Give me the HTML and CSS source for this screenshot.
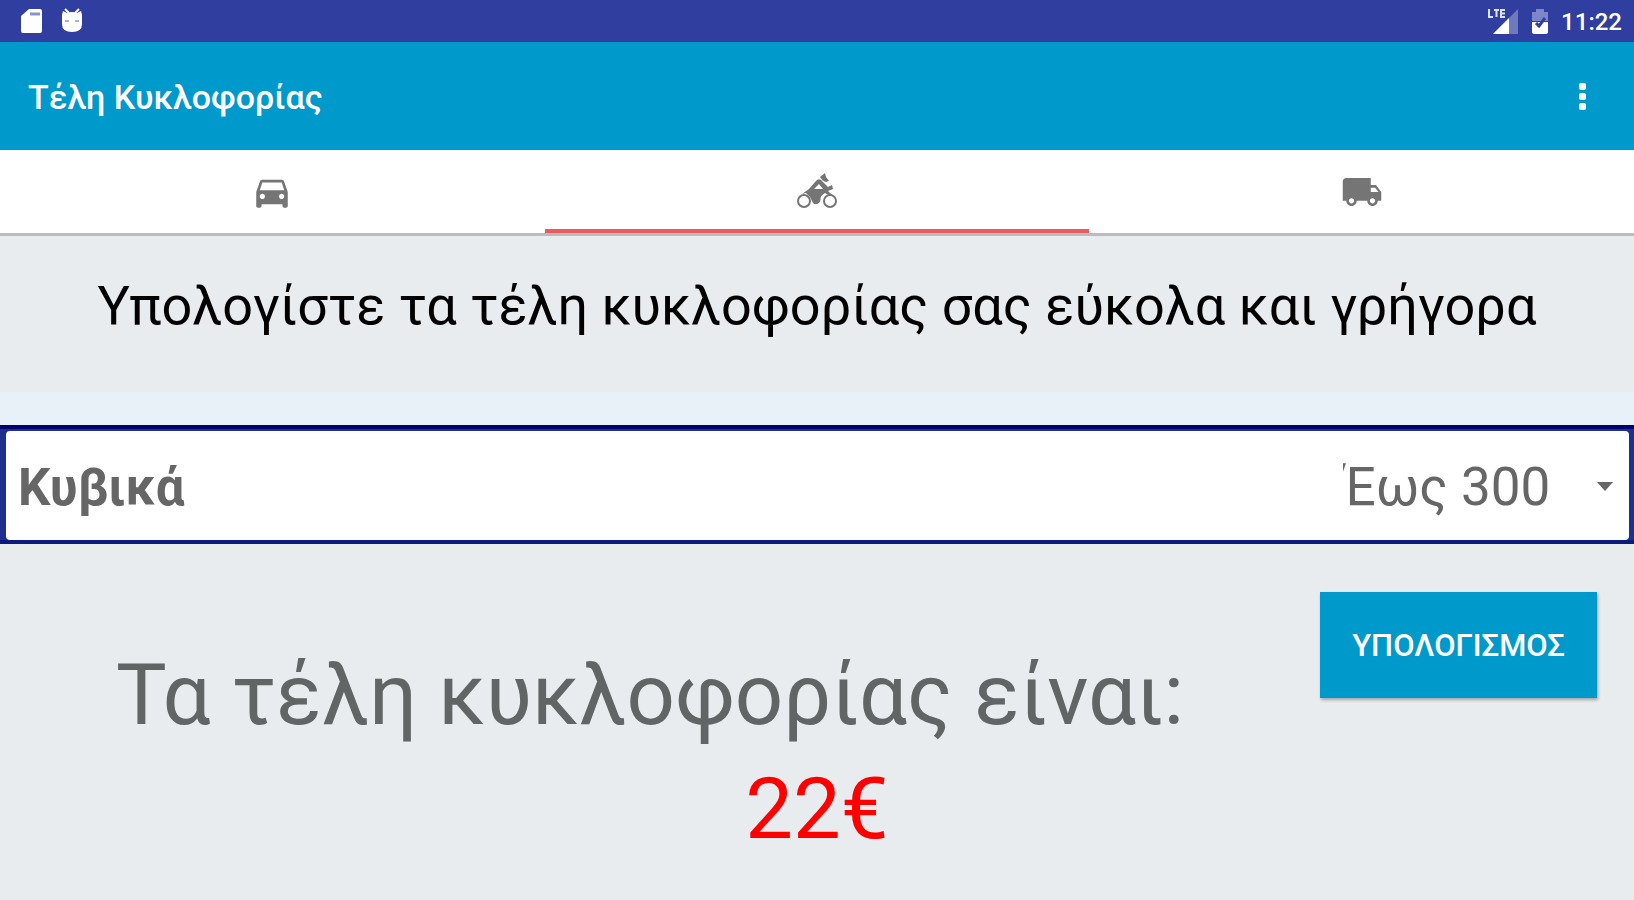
FILE: index.html
```html
<!DOCTYPE html>
<html lang="el">
<head>
    <meta charset="UTF-8">
    <meta name="viewport" content="width=device-width, initial-scale=1.0">
    <title>Τέλη Κυκλοφορίας</title>
    <link rel="stylesheet" href="styles.css">
</head>
<body>
    <div class="status-bar">
        <div class="status-group status-left">
            <svg class="status-icon" viewBox="0 0 24 28">
                <path d="M9 2h11q2 0 2 2v20q0 2-2 2H3q-2 0-2-2V9z" fill="#fff"/>
                <path d="M10 7h10" stroke="#8b93cf" stroke-width="3"/>
            </svg>
            <svg class="status-icon" viewBox="0 0 24 28">
                <path d="M5 2l4 4M19 2l-4 4" stroke="#fff" stroke-width="2"/>
                <path d="M3 4l4 2q5-2 10 0l4-2 1 4v9q0 8-10 8T2 17V8z" fill="#fff"/>
                <path d="M5 14h4M15 14h4" stroke="#aab0dd" stroke-width="2"/>
            </svg>
        </div>
        <div class="status-group">
            <svg class="signal-icon" viewBox="0 0 34 28">
                <path d="M33 2v25H8z" fill="#6f79c0"/>
                <path d="M24 11v16H8z" fill="#fff"/>
                <path d="M4 2v8h4M9 3h5M11.500 3v7M20 3h-4v7h4M16 6.500h4" fill="none" stroke="#dfe2f5" stroke-width="2"/>
            </svg>
            <svg class="battery-icon" viewBox="0 0 18 28">
                <path d="M5 2h8v3h4v9H1V5h4z" fill="#7d86c8"/>
                <path d="M1 15h16v10q0 2-2 2H3q-2 0-2-2z" fill="#fff"/>
                <path d="M14 11l-6 8-3-3" fill="none" stroke="#303f9f" stroke-width="3"/>
            </svg>
            <span class="clock">11:22</span>
        </div>
    </div>

    <header class="app-bar">
        <h1>Τέλη Κυκλοφορίας</h1>
        <button class="menu-button" type="button" aria-label="Μενού">
            <svg viewBox="0 0 8 28">
                <rect x="0" y="0" width="7" height="7" rx="2"/>
                <rect x="0" y="10" width="7" height="7" rx="2"/>
                <rect x="0" y="20" width="7" height="7" rx="2"/>
            </svg>
        </button>
    </header>

    <nav class="tabs">
        <button class="tab" type="button" aria-label="Αυτοκίνητο">
            <svg viewBox="0 0 24 24">
                <path d="M18.920 6.010C18.720 5.420 18.160 5 17.500 5h-11c-.66 0-1.210.42-1.420 1.010L3 12v8c0 .55.45 1 1 1h1c.55 0 1-.45 1-1v-1h12v1c0 .55.45 1 1 1h1c.55 0 1-.45 1-1v-8l-2.080-5.990zM6.500 16c-.83 0-1.500-.67-1.500-1.500S5.670 13 6.500 13s1.500.67 1.500 1.500S7.330 16 6.500 16zm11 0c-.83 0-1.500-.67-1.500-1.500s.67-1.500 1.500-1.500 1.500.67 1.500 1.500-.67 1.500-1.500 1.500zM5 11l1.500-4.500h11L19 11H5z"/>
            </svg>
        </button>
        <button class="tab active" type="button" aria-label="Μοτοσυκλέτα">
            <svg viewBox="0 0 42 42">
                <circle cx="8" cy="30" r="6" fill="none" stroke="#757575" stroke-width="2"/>
                <circle cx="34" cy="30" r="6" fill="none" stroke="#757575" stroke-width="2"/>
                <path d="M6 23l7-5 7-8q2-3 5-1l7 7 4-2 1 4-5 2 4 4-2 1-5-3-4 3-1 6q-4 4-7 1l-3-6-4-4zM18 18h9l-4-5z" fill-rule="evenodd"/>
                <path d="M24 6l5-4 1 4 3 4-3 1q-4-1-6-5z"/>
            </svg>
        </button>
        <button class="tab" type="button" aria-label="Φορτηγό">
            <svg viewBox="0 0 24 24">
                <path d="M20 8h-3V4H3c-1.100 0-2 .9-2 2v11h2c0 1.660 1.340 3 3 3s3-1.340 3-3h6c0 1.660 1.340 3 3 3s3-1.340 3-3h2v-5l-3-4zM6 18.500c-.83 0-1.500-.67-1.500-1.500s.67-1.500 1.500-1.500 1.500.67 1.500 1.500-.67 1.500-1.500 1.500zm13.500-9l1.960 2.500H17V9.500h2.500zm-1.500 9c-.83 0-1.500-.67-1.500-1.500s.67-1.500 1.500-1.500 1.500.67 1.500 1.500-.67 1.500-1.500 1.500z"/>
            </svg>
        </button>
    </nav>

    <main>
        <p class="intro">Υπολογίστε τα τέλη κυκλοφορίας σας εύκολα και γρήγορα</p>
        <form class="calculator">
            <div class="field">
                <div class="field-inner">
                    <label for="cc">Κυβικά</label>
                    <div class="select-box">
                        <select id="cc" name="cc">
                            <option>Έως 300</option>
                        </select>
                        <svg class="arrow" viewBox="0 0 16 10"><path d="M0 0h16L8 9z"/></svg>
                    </div>
                </div>
            </div>
            <div class="result-row">
                <p class="result-label">Τα τέλη κυκλοφορίας είναι:</p>
                <button class="submit" type="button">ΥΠΟΛΟΓΙΣΜΟΣ</button>
            </div>
            <output class="result" for="cc">22€</output>
        </form>
    </main>
</body>
</html>
```
FILE: styles.css
```css
* {
    box-sizing: border-box;
}
body {
    margin: 0;
    min-height: 100vh;
    font-family: Roboto, 'Noto Sans', sans-serif;
    background-color: #e8ecef;
    color: #616566;
}
button,
select {
    border: none;
    font-family: inherit;
    cursor: pointer;
}
svg {
    display: block;
}

/* Status bar */
.status-bar {
    display: flex;
    justify-content: space-between;
    align-items: center;
    height: 42px;
    padding: 0 12px 0 20px;
    background-color: #303f9f;
    color: white;
}
.status-group {
    display: flex;
    align-items: center;
    gap: 12px;
}
.status-left {
    gap: 16px;
}
.status-icon {
    width: 24px;
    height: 28px;
}
.signal-icon {
    width: 34px;
    height: 28px;
}
.battery-icon {
    width: 18px;
    height: 28px;
}
.clock {
    padding-top: 2px;
    font-size: 24px;
    font-weight: 500;
}

/* App bar */
.app-bar {
    display: flex;
    justify-content: space-between;
    align-items: center;
    height: 108px;
    padding: 2px 39px 0 28px;
    background-color: #0099cc;
}
h1 {
    margin: 0;
    font-size: 34px;
    font-weight: 500;
    color: white;
}
.menu-button {
    padding: 8px;
    background: none;
}
.menu-button svg {
    width: 8px;
    height: 28px;
    fill: white;
}

/* Tabs */
.tabs {
    display: flex;
    background-color: white;
    border-bottom: 3px solid #b9bdbf;
}
.tab {
    flex: 1;
    display: flex;
    justify-content: center;
    align-items: center;
    height: 83px;
    padding: 4px 0 0;
    background: none;
    border-bottom: 4px solid transparent;
}
.tab.active {
    border-bottom-color: #ea5b60;
}
.tab svg {
    width: 42px;
    height: 42px;
    fill: #757575;
}

.intro {
    margin: 0;
    padding: 36px 20px 52px;
    font-size: 54px;
    line-height: 68px;
    text-align: center;
    color: black;
}

/* Form */
.calculator {
    border-top: 33px solid #e8f0f8;
}
.field {
    padding: 2px 5px 0 6px;
    background-color: #1e2f8d;
    border-top: 4px solid #000070;
    border-bottom: 4px solid #0c1a7c;
}
.field-inner {
    display: flex;
    justify-content: space-between;
    align-items: center;
    height: 109px;
    padding: 3px 16px 0 12px;
    background-color: white;
    border-radius: 4px;
    font-size: 52px;
    color: #666;
}
.field-inner label {
    font-size: 51px;
    font-weight: 700;
}
.select-box {
    display: flex;
    align-items: center;
    position: relative;
}
.select-box select {
    appearance: none;
    padding: 0 62px 0 0;
    background: none;
    font-size: 53px;
    color: #666;
}
.arrow {
    position: absolute;
    right: 0;
    width: 16px;
    height: 10px;
    fill: #666;
    pointer-events: none;
}

/* Result */
.result-row {
    display: flex;
    align-items: flex-start;
    padding: 48px 37px 0 0;
}
.result-label {
    flex: 1;
    margin: 0;
    padding: 53px 0 0 0;
    font-size: 85px;
    line-height: 100px;
    text-align: center;
}
.submit {
    margin-left: 20px;
    padding: 0 32px;
    height: 106px;
    background-color: #0099cc;
    color: white;
    font-size: 31px;
    font-weight: 500;
    box-shadow: 1px 2px 3px rgba(0, 0, 0, 0.3);
}
.result {
    display: block;
    margin-top: 14px;
    font-size: 85px;
    line-height: 100px;
    text-align: center;
    color: red;
}
```
